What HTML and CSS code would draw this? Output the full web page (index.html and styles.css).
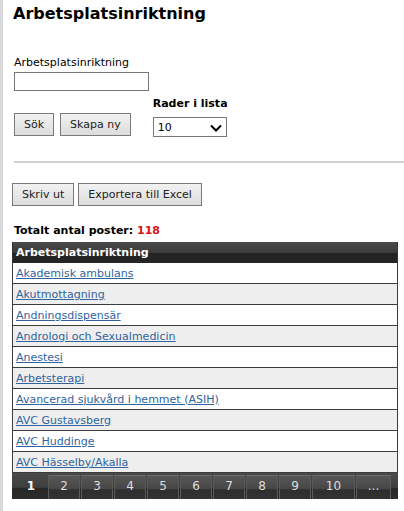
FILE: index.html
```html
<!DOCTYPE html>
<html lang="sv">
<head>
    <meta charset="UTF-8">
    <meta name="viewport" content="width=device-width, initial-scale=1.0">
    <title>Arbetsplatsinriktning</title>
    <link rel="stylesheet" href="styles.css">
</head>
<body>
    <div class="page">
        <h1>Arbetsplatsinriktning</h1>

        <!-- Search form -->
        <form class="search">
            <label for="searchName">Arbetsplatsinriktning</label>
            <input type="text" id="searchName" class="text-input">
            <div class="search-row">
                <div class="btns">
                    <button type="button" class="btn">Sök</button>
                    <button type="button" class="btn">Skapa ny</button>
                </div>
                <div class="rows-field">
                    <label for="rowCount" class="bold-label">Rader i lista</label>
                    <div class="select-wrap">
                        <select id="rowCount">
                            <option>10</option>
                            <option>25</option>
                            <option>50</option>
                        </select>
                        <svg class="chevron" width="12" height="8" viewBox="0 0 12 8"><path d="M1 1.5 L6 6.5 L11 1.5" fill="none" stroke="#000" stroke-width="2"/></svg>
                    </div>
                </div>
            </div>
        </form>

        <hr class="divider">

        <div class="actions">
            <button type="button" class="btn">Skriv ut</button>
            <button type="button" class="btn">Exportera till Excel</button>
        </div>

        <p class="total">Totalt antal poster: <span class="count">118</span></p>

        <table class="grid">
            <thead>
                <tr><th>Arbetsplatsinriktning</th></tr>
            </thead>
            <tbody>
                <tr><td><a href="#">Akademisk ambulans</a></td></tr>
                <tr class="alt"><td><a href="#">Akutmottagning</a></td></tr>
                <tr><td><a href="#">Andningsdispensär</a></td></tr>
                <tr class="alt"><td><a href="#">Andrologi och Sexualmedicin</a></td></tr>
                <tr><td><a href="#">Anestesi</a></td></tr>
                <tr class="alt"><td><a href="#">Arbetsterapi</a></td></tr>
                <tr><td><a href="#">Avancerad sjukvård i hemmet (ASIH)</a></td></tr>
                <tr class="alt"><td><a href="#">AVC Gustavsberg</a></td></tr>
                <tr><td><a href="#">AVC Huddinge</a></td></tr>
                <tr class="alt"><td><a href="#">AVC Hässelby/Akalla</a></td></tr>
            </tbody>
        </table>

        <div class="pager">
            <span class="page-link current">1</span>
            <a href="#" class="page-link">2</a>
            <a href="#" class="page-link">3</a>
            <a href="#" class="page-link">4</a>
            <a href="#" class="page-link">5</a>
            <a href="#" class="page-link">6</a>
            <a href="#" class="page-link">7</a>
            <a href="#" class="page-link">8</a>
            <a href="#" class="page-link">9</a>
            <a href="#" class="page-link wide">10</a>
            <a href="#" class="page-link more">...</a>
        </div>
    </div>
</body>
</html>
```

FILE: styles.css
```css
body {
    margin: 0;
    font-family: Verdana, "DejaVu Sans", sans-serif;
    font-size: 11px;
    color: #000;
    background: #fff;
}

.page {
    border-left: 3px solid #d8d8d8;
    padding: 4px 7px 0 9px;
    min-height: 507px;
}

h1 {
    font-size: 16px;
    font-weight: bold;
    margin: 0 0 0 1px;
    line-height: 20px;
}

.search {
    margin-top: 32px;
    padding-left: 2px;
}

.search label {
    display: block;
    line-height: 14px;
}

.text-input {
    display: block;
    width: 129px;
    height: 17px;
    margin: 2px 0 0;
    padding: 0 2px;
    border: 1px solid #777;
    font: inherit;
    box-sizing: content-box;
}

.search-row {
    display: flex;
    align-items: flex-end;
    gap: 22px;
    margin-top: 6px;
}

.btns {
    display: flex;
    gap: 6px;
}

.btn {
    height: 23px;
    padding: 0 9px;
    border: 1px solid #7a7a7a;
    background: linear-gradient(#f2f2f2, #dcdcdc);
    font-family: Verdana, "DejaVu Sans", sans-serif;
    font-size: 11px;
    color: #222;
    cursor: pointer;
}

.rows-field .bold-label {
    font-weight: bold;
    font-size: 11px;
    margin-bottom: 6px;
}

.select-wrap {
    position: relative;
    width: 74px;
    margin-bottom: -1px;
}

.select-wrap select {
    appearance: none;
    width: 74px;
    height: 20px;
    padding: 0 4px;
    border: 1px solid #777;
    background: #fff;
    font-family: Verdana, "DejaVu Sans", sans-serif;
    font-size: 11px;
}

.chevron {
    position: absolute;
    right: 5px;
    top: 7px;
    pointer-events: none;
}

.divider {
    border: none;
    border-top: 2px solid #d0d0d0;
    margin: 25px -7px 0 2px;
}

.actions {
    display: flex;
    gap: 4px;
    margin-top: 20px;
}

.total {
    font-weight: bold;
    margin: 18px 0 0 2px;
    line-height: 14px;
}

.count {
    color: #d8141a;
}

.grid {
    width: 386px;
    border-collapse: collapse;
    margin-top: 4px;
}

.grid th {
    height: 21px;
    padding: 0 3px;
    text-align: left;
    color: #fff;
    font-size: 11px;
    background: linear-gradient(#4a4a4a 0%, #3c3c3c 50%, #222 55%, #262626 100%);
    border-left: 1px solid #333;
    border-right: 1px solid #333;
}

.grid td {
    height: 20px;
    padding: 0 3px;
    border: 1px solid #3c3c3c;
    border-top: none;
    background: #fff;
}

.grid tr.alt td {
    background: #eeeeee;
}

.grid a {
    color: #2f64a0;
    text-decoration: underline;
}

.pager {
    display: flex;
    width: 386px;
    height: 26px;
    padding-left: 3px;
    box-sizing: border-box;
    background: linear-gradient(#4a4a4a 0%, #3e3e3e 55%, #262626 60%, #2c2c2c 100%);
}

.page-link {
    flex: none;
    box-sizing: border-box;
    width: 32px;
    margin: 2px 1px 0 0;
    text-align: center;
    line-height: 21px;
    font-size: 12px;
    color: #ddd;
    text-decoration: none;
    border-left: 1px solid #5a5a5a;
    border-right: 1px solid #5a5a5a;
    border-top: 1px solid #6a6a6a;
    background: linear-gradient(#575757 0%, #474747 55%, #2e2e2e 60%, #333 100%);
}

.page-link.current {
    color: #fff;
    font-weight: bold;
    border-color: transparent;
    background: none;
}

.page-link.wide {
    width: 43px;
}

.page-link.more {
    width: 35px;
}
```
